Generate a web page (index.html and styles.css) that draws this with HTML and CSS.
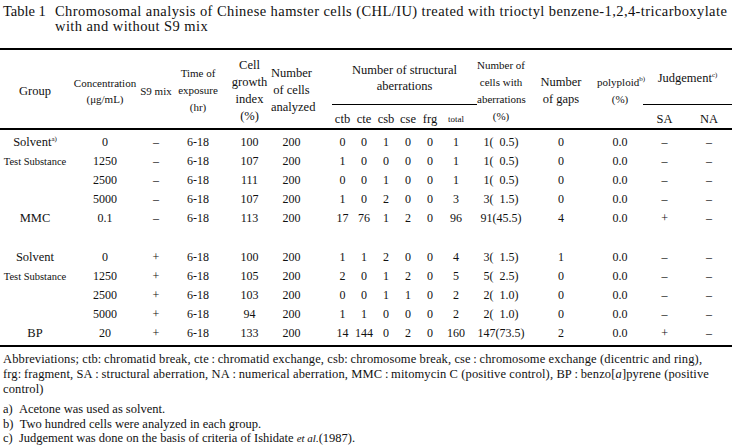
FILE: index.html
```html
<!DOCTYPE html>
<html lang="en">
<head>
<meta charset="utf-8">
<title>Table 1</title>
<link rel="stylesheet" href="styles.css">
</head>
<body>
<div class="title">
  <span class="label">Table 1</span>
  <span class="text">Chromosomal analysis of Chinese hamster cells (CHL/IU) treated with trioctyl benzene-1,2,4-tricarboxylate<br>with and without S9 mix</span>
</div>

<table class="data">
  <colgroup>
    <col class="w70"><col class="w70"><col class="w32"><col class="w56"><col class="w43"><col class="w61">
    <col class="w21"><col class="w22"><col class="w22"><col class="w22"><col class="w22"><col class="w36">
    <col class="w48"><col class="w72"><col class="w46"><col class="w43"><col class="w46">
  </colgroup>
  <thead>
    <tr class="r1">
      <th rowspan="2" class="f12">Group</th>
      <th rowspan="2" class="f11 two">Concentration<br>(<span class="mu">μ</span>g/mL)</th>
      <th rowspan="2" class="f11">S9 mix</th>
      <th rowspan="2" class="f11 time tall">Time of<br>exposure<br>(hr)</th>
      <th rowspan="2" class="f12 tall">Cell<br>growth<br>index<br>(%)</th>
      <th rowspan="2" class="f12 anal tall">Number<br>of cells<br>analyzed</th>
      <th colspan="6" class="f12 span">Number of structural<br>aberrations</th>
      <th rowspan="2" class="f11 tall">Number of<br>cells with<br>aberrations<br>(%)</th>
      <th rowspan="2" class="f12 tall">Number<br>of gaps</th>
      <th rowspan="2" class="f11 tall">polyploid<sup>b)</sup><br>(%)</th>
      <th colspan="2" class="f12 span">Judgement<sup>c)</sup></th>
    </tr>
    <tr class="r2">
      <th class="f12">ctb</th><th class="f12">cte</th><th class="f12">csb</th><th class="f12">cse</th><th class="f12">frg</th><th class="f9 tot">total</th>
      <th class="f12">SA</th><th class="f12">NA</th>
    </tr>
  </thead>
  <tbody>
    <tr class="pad-top"><td colspan="17"></td></tr>
    <tr><td class="grp">Solvent<sup>a)</sup></td><td>0</td><td>–</td><td class="time">6-18</td><td>100</td><td class="anal">200</td><td>0</td><td>0</td><td>1</td><td>0</td><td>0</td><td class="tot">1</td><td>1(&#8199;0.5)</td><td>0</td><td>0.0</td><td>–</td><td>–</td></tr>
    <tr><td class="grp small">Test Substance</td><td>1250</td><td>–</td><td class="time">6-18</td><td>107</td><td class="anal">200</td><td>1</td><td>0</td><td>0</td><td>0</td><td>0</td><td class="tot">1</td><td>1(&#8199;0.5)</td><td>0</td><td>0.0</td><td>–</td><td>–</td></tr>
    <tr><td class="grp"></td><td>2500</td><td>–</td><td class="time">6-18</td><td>111</td><td class="anal">200</td><td>0</td><td>0</td><td>1</td><td>0</td><td>0</td><td class="tot">1</td><td>1(&#8199;0.5)</td><td>0</td><td>0.0</td><td>–</td><td>–</td></tr>
    <tr><td class="grp"></td><td>5000</td><td>–</td><td class="time">6-18</td><td>107</td><td class="anal">200</td><td>1</td><td>0</td><td>2</td><td>0</td><td>0</td><td class="tot">3</td><td>3(&#8199;1.5)</td><td>0</td><td>0.0</td><td>–</td><td>–</td></tr>
    <tr><td class="grp">MMC</td><td>0.1</td><td>–</td><td class="time">6-18</td><td>113</td><td class="anal">200</td><td>17</td><td>76</td><td>1</td><td>2</td><td>0</td><td class="tot">96</td><td>91(45.5)</td><td>4</td><td>0.0</td><td>+</td><td>–</td></tr>
    <tr class="gap"><td colspan="17"></td></tr>
    <tr><td class="grp">Solvent</td><td>0</td><td>+</td><td class="time">6-18</td><td>100</td><td class="anal">200</td><td>1</td><td>1</td><td>2</td><td>0</td><td>0</td><td class="tot">4</td><td>3(&#8199;1.5)</td><td>1</td><td>0.0</td><td>–</td><td>–</td></tr>
    <tr><td class="grp small">Test Substance</td><td>1250</td><td>+</td><td class="time">6-18</td><td>105</td><td class="anal">200</td><td>2</td><td>0</td><td>1</td><td>2</td><td>0</td><td class="tot">5</td><td>5(&#8199;2.5)</td><td>0</td><td>0.0</td><td>–</td><td>–</td></tr>
    <tr><td class="grp"></td><td>2500</td><td>+</td><td class="time">6-18</td><td>103</td><td class="anal">200</td><td>0</td><td>0</td><td>1</td><td>1</td><td>0</td><td class="tot">2</td><td>2(&#8199;1.0)</td><td>0</td><td>0.0</td><td>–</td><td>–</td></tr>
    <tr><td class="grp"></td><td>5000</td><td>+</td><td class="time">6-18</td><td>94</td><td class="anal">200</td><td>1</td><td>1</td><td>0</td><td>0</td><td>0</td><td class="tot">2</td><td>2(&#8199;1.0)</td><td>0</td><td>0.0</td><td>–</td><td>–</td></tr>
    <tr><td class="grp">BP</td><td>20</td><td>+</td><td class="time">6-18</td><td>133</td><td class="anal">200</td><td>14</td><td>144</td><td>0</td><td>2</td><td>0</td><td class="tot">160</td><td>147(73.5)</td><td>2</td><td>0.0</td><td>+</td><td>–</td></tr>
    <tr class="pad-bot"><td colspan="17"></td></tr>
  </tbody>
</table>

<div class="notes">
  <p class="abbr">Abbreviations; ctb:&thinsp;chromatid break, cte&thinsp;:&thinsp;chromatid exchange, csb:&thinsp;chromosome break, cse&thinsp;:&thinsp;chromosome exchange (dicentric and ring),<br>frg:&thinsp;fragment, SA&thinsp;:&thinsp;structural aberration, NA&thinsp;:&thinsp;numerical aberration, MMC&thinsp;:&thinsp;mitomycin C (positive control), BP&thinsp;:&thinsp;benzo<span class="br">[<i>a</i>]</span>pyrene (positive<br>control)</p>
  <p class="fn">a)&ensp;Acetone was used as solvent.<br>b)&ensp;Two hundred cells were analyzed in each group.<br>c)&ensp;Judgement was done on the basis of criteria of Ishidate <i class="etal">et al.</i>(1987).</p>
</div>
</body>
</html>
```

FILE: styles.css
```css
html, body {
  margin: 0;
  padding: 0;
  background: #fff;
}

body {
  width: 732px;
  font-family: "Liberation Serif", "Tinos", "Times New Roman", "DejaVu Serif", serif;
  color: #111;
}

.title {
  display: flex;
  padding: 4px 0 0 3px;
  font-size: 14.5px;
  line-height: 15px;
}

.title .label {
  flex: none;
  width: 52px;
}

.title .text {
  flex: 1;
  letter-spacing: 0.42px;
  white-space: nowrap;
}

table.data {
  width: 732px;
  table-layout: fixed;
  border-collapse: collapse;
  margin-top: 14px;
  border-top: 2px solid #000;
  border-bottom: 2px solid #000;
  font-family: inherit;
}

.w70 { width: 70px; }
.w32 { width: 32px; }
.w56 { width: 56px; }
.w43 { width: 43px; }
.w61 { width: 61px; }
.w21 { width: 21px; }
.w22 { width: 22px; }
.w36 { width: 36px; }
.w48 { width: 48px; }
.w72 { width: 72px; }
.w46 { width: 46px; }

thead {
  border-bottom: 2px solid #000;
}

th, td {
  padding: 0;
  text-align: center;
  white-space: nowrap;
  font-weight: normal;
  font-family: inherit;
}

th {
  line-height: 16px;
  vertical-align: middle;
}

.r1 { height: 55px; }
.r1 th { padding-top: 3px; }
.r2 { height: 25px; }
.r2 th { padding-top: 5px; }

.f12 { font-size: 12.5px; }
.f11 { font-size: 11px; }
.f9 { font-size: 9px; }

th.span {
  border-bottom: 1px solid #000;
}

th.tall { line-height: 17px; }
th.two { line-height: 16px; }

.time { padding-right: 4px; }
.anal { padding-right: 20px; }
.tot { padding-right: 6px; }

sup {
  font-size: 7px;
  line-height: 0;
  vertical-align: 5px;
}

tbody td {
  font-size: 12px;
  height: 19px;
  line-height: 19px;
}

tbody td.grp { font-size: 12.5px; }
tbody td.grp.small { font-size: 10.5px; }

tbody tr.pad-top td { height: 3px; line-height: 0; }
tbody tr.gap td { height: 20px; }
tbody tr.pad-bot td { height: 2px; line-height: 0; }

.notes {
  padding: 5px 0 0 3px;
  font-size: 12.5px;
  line-height: 15px;
}

.notes p {
  margin: 0;
}

.notes .abbr {
  letter-spacing: 0.12px;
}

.notes .fn {
  margin-top: 5px;
  line-height: 14.5px;
}

.etal { font-size: 11px; }
```
